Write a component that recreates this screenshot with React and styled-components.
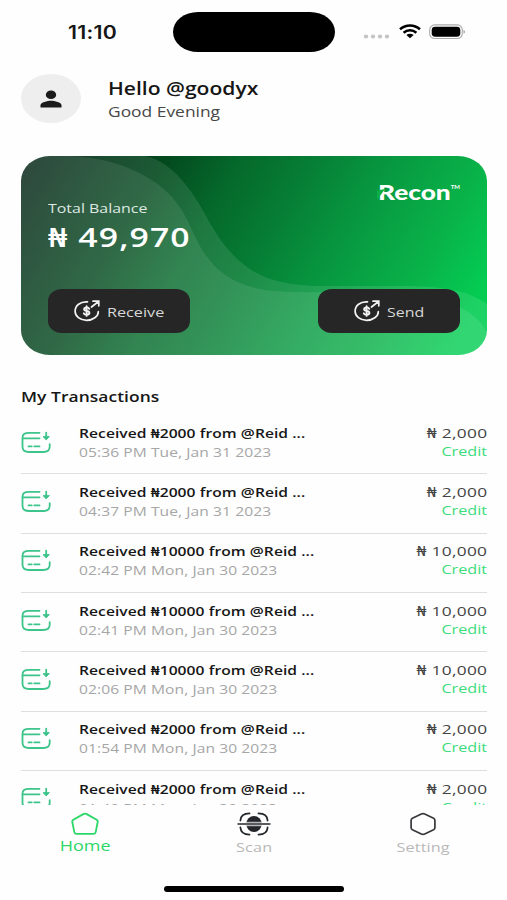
import React from "react";
import styled, { createGlobalStyle } from "styled-components";

const GlobalStyle = createGlobalStyle`
  * { box-sizing: border-box; }
  body { margin: 0; background: #fff; overflow: hidden; }
`;

const Screen = styled.main`
  width: 507px;
  height: 900px;
  display: flex;
  flex-direction: column;
  overflow: hidden;
  background: #fefefe;
  font-family: "Open Sans", "Noto Sans", sans-serif;
  color: #161616;
`;

/* Expanded-width lettering: every label is widened from a fixed edge. */
const Label = styled.span`
  display: block;
  white-space: nowrap;
  flex: none;
  font-size: ${(p) => p.$size}px;
  font-weight: ${(p) => p.$weight || 400};
  line-height: ${(p) => p.$line}px;
  letter-spacing: ${(p) => p.$spacing || 0}px;
  color: ${(p) => p.$color || "inherit"};
  transform: scaleX(${(p) => p.$stretch || 1.2});
  transform-origin: ${(p) => p.$from || "left"} center;
`;

const StatusBar = styled.header`
  height: 64px;
  flex: none;
  display: grid;
  grid-template-columns: 105px 162px 1fr;
  padding: 12px 0 0 68px;
`;

const Clock = styled(Label)`
  font-family: Inter, sans-serif;
  padding-top: 9px;
`;

const Island = styled.div`
  height: 40px;
  border-radius: 25px / 20px;
  background: #000;
`;

const StatusIcons = styled.div`
  display: flex;
  align-items: flex-start;
  gap: 8px;
  padding: 12px 0 0 28px;
  svg { display: block; }
`;

const Greeting = styled.section`
  height: 92px;
  flex: none;
  display: flex;
  gap: 27px;
  padding: 10px 0 0 21px;
`;

const Avatar = styled.div`
  width: 60px;
  height: 49px;
  border-radius: 50%;
  background: #eeeeee;
  display: flex;
  align-items: center;
  justify-content: center;
`;

const GreetingText = styled.div`
  padding-top: 2px;
`;

const Card = styled.section`
  position: relative;
  width: 466px;
  height: 199px;
  flex: none;
  margin-left: 21px;
  border-radius: 29px / 25px;
  overflow: hidden;
  background: linear-gradient(
    120deg,
    #001f12 0%,
    #03491e 25%,
    #05692b 38%,
    #067d34 50%,
    #07943f 62%,
    #09b249 80%,
    #04cb52 92%,
    #06d258 100%
  );
  color: #fff;
`;

const Waves = styled.svg`
  position: absolute;
  inset: 0;
`;

const CardContent = styled.div`
  position: relative;
  height: 100%;
  padding: 24px 27px 22px;
  display: flex;
  flex-direction: column;
  justify-content: space-between;
`;

const CardRow = styled.div`
  display: flex;
  justify-content: space-between;
`;

const Balance = styled.div`
  padding-top: 19px;
`;

const Brand = styled.div`
  position: relative;
  width: 82px;
  display: flex;
  align-items: flex-start;
  justify-content: space-between;
  font-family: Lato, sans-serif;
`;

const BrandCut = styled.svg`
  position: absolute;
  left: -1px;
  top: 3px;
`;

const ActionButton = styled.button`
  width: 142px;
  height: 44px;
  border: 0;
  border-radius: 14px / 12px;
  padding: 0 0 0 ${(p) => p.$inset}px;
  background: #262626;
  color: #d8d8d8;
  font-family: inherit;
  display: flex;
  align-items: center;
  gap: 7px;
  > span { padding-top: 1px; }
`;

const Heading = styled.h2`
  height: 60px;
  flex: none;
  margin: 0;
  padding: 31px 0 0 21px;
`;

const List = styled.ul`
  list-style: none;
  margin: 0 20px 0 21px;
  padding: 0;
  height: 390px;
  flex: none;
  overflow: hidden;
`;

const Row = styled.li`
  height: 59.35px;
  border-bottom: 1.5px solid #dedede;
  display: grid;
  grid-template-columns: 58px 1fr 100px;
  padding-top: 8.500px;
  > svg { margin-top: 7px; }
`;

const Amount = styled.div`
  display: flex;
  flex-direction: column;
  align-items: flex-end;
`;

const TabBar = styled.nav`
  height: 76px;
  flex: none;
  display: flex;
  justify-content: space-between;
  padding: 7px 30px 0 31px;
`;

const Tab = styled.a`
  width: 108px;
  display: flex;
  flex-direction: column;
  align-items: center;
  gap: ${(p) => p.$gap}px;
`;

const HomeIndicator = styled.div`
  width: 180px;
  height: 6px;
  margin: 5px 0 0 164px;
  border-radius: 3px;
  background: #000;
`;

const WifiIcon = () => (
  <svg width="22" height="15" viewBox="0 0 22 15">
    <g fill="none" stroke="#000" strokeWidth="2.5">
      <path d="M1 5.3C6.8.1 15.200.1 21 5.3" />
      <path d="M4.600 8.800C8.300 5.500 13.700 5.500 17.400 8.800" />
    </g>
    <path d="M7.400 10.900c2-1.700 5.200-1.700 7.200 0L11 14.300z" fill="#000" />
  </svg>
);

const SignalDots = () => (
  <svg width="28" height="16" viewBox="0 0 28 16">
    {[3, 10, 17, 24].map((x) => (
      <ellipse key={x} cx={x} cy="12.500" rx="2.200" ry="1.900" fill="#c4c4c4" />
    ))}
  </svg>
);

const BatteryIcon = () => (
  <svg width="37" height="16" viewBox="0 0 37 16">
    <rect x="0.700" y="0.900" width="32.600" height="13.600" rx="5" fill="none" stroke="#aaa" strokeWidth="1.100" />
    <rect x="2.700" y="2.700" width="28.600" height="10" rx="3.400" fill="#000" />
    <path d="M34.600 5.900c1.600.5 1.600 3.200 0 3.700z" fill="#888" />
  </svg>
);

const PersonIcon = () => (
  <svg width="22" height="18" viewBox="0 0 22 18">
    <ellipse cx="11" cy="4.700" rx="5.200" ry="4.300" fill="#1b1b1b" />
    <path d="M.5 17.500v-2.200c0-3 7-4.600 10.500-4.600s10.500 1.600 10.500 4.600v2.200z" fill="#1b1b1b" />
  </svg>
);

const MoneyIcon = () => (
  <svg width="26" height="22" viewBox="0 0 26 22" fill="none" stroke="#f2f2f2" strokeWidth="1.700" strokeLinecap="round">
    <path d="M13.500 1.900C6.200 1.300 1.100 5.600 1.100 11.200c0 5.100 5 9.200 11.400 9.200s11.800-4.100 11.800-8.700" />
    <path d="M17.500 7 24.500 1.500M19 1.200h5.800v4.600" />
    <path d="M15.300 8.800c-.4-1-1.300-1.400-2.600-1.400-3.300 0-3.500 3.200 0 3.600 3.700.4 3.500 3.800 0 3.800-1.500 0-2.500-.5-2.900-1.500M12.600 6.300v9.600" strokeWidth="1.900" />
  </svg>
);

const CardInIcon = () => (
  <svg width="30" height="23" viewBox="0 0 30 23" fill="none" stroke="#3cc48a" strokeWidth="1.800" strokeLinecap="round">
    <path d="M18.500 1.800H8C3.500 1.800 1.500 3.300 1.500 6.800v8.900c0 3.700 2 5.300 6.500 5.300h14c4.500 0 6.700-1.600 6.700-5.300v-2.500" />
    <path d="M1.700 7.300h16.800M7.500 15.400h3.200M13.300 15.400h5.200" />
    <path d="M25.200 1.700v6" />
    <path d="m22.300 5.900 2.900 2.800 2.900-2.800z" fill="#3cc48a" strokeWidth="1" strokeLinejoin="round" />
  </svg>
);

const PentagonIcon = () => (
  <svg width="28" height="24" viewBox="0 0 28 24">
    <path
      d="M12.300 2.100 2.300 7.800Q1 8.700 1.300 10L3.300 20.100Q3.700 21.900 5.700 21.900H22.300Q24.300 21.900 24.700 20.100L26.700 10Q27 8.700 25.700 7.800L15.700 2.100Q14 1.200 12.300 2.100z"
      fill="none" stroke="#2bd768" strokeWidth="1.800"
    />
  </svg>
);

const ScanIcon = () => (
  <svg width="34" height="24" viewBox="0 0 34 24">
    <ellipse cx="17" cy="12" rx="7.700" ry="8" fill="#23272b" />
    <path d="M12.500 1.400C6.500 1.400 3.700 3.500 3.400 8.500M21.500 1.400c6 0 8.800 2.100 9.100 7.100M12.500 22.600c-6 0-8.800-2.100-9.100-7.100M21.500 22.600c6 0 8.800-2.100 9.100-7.100" fill="none" stroke="#23272b" strokeWidth="1.800" strokeLinecap="round" />
    <path d="M9 10.300h16M9 13.700h16" stroke="#ddd" strokeWidth="1" />
    <path d="M.5 12h33" stroke="#5a5d60" strokeWidth="2" />
  </svg>
);

const HexagonIcon = () => (
  <svg width="26" height="24" viewBox="0 0 26 24">
    <path
      d="M11.300 2.100 2.400 6.300Q1.100 7 1.100 8.200v7.600q0 1.200 1.300 1.900l8.900 4.200q1.700.8 3.400 0l8.900-4.200q1.300-.7 1.300-1.900V8.200q0-1.200-1.300-1.900L14.700 2.100Q13 1.300 11.300 2.100z"
      fill="none" stroke="#36383b" strokeWidth="1.700"
    />
  </svg>
);

const transactions = [
  { sum: "2000", shown: "2,000", date: "05:36 PM Tue, Jan 31 2023" },
  { sum: "2000", shown: "2,000", date: "04:37 PM Tue, Jan 31 2023" },
  { sum: "10000", shown: "10,000", date: "02:42 PM Mon, Jan 30 2023" },
  { sum: "10000", shown: "10,000", date: "02:41 PM Mon, Jan 30 2023" },
  { sum: "10000", shown: "10,000", date: "02:06 PM Mon, Jan 30 2023" },
  { sum: "2000", shown: "2,000", date: "01:54 PM Mon, Jan 30 2023" },
  { sum: "2000", shown: "2,000", date: "01:40 PM Mon, Jan 30 2023" },
];

export default function App() {
  return (
    <Screen>
      <GlobalStyle />
      <StatusBar>
        <Clock $size={18} $line={23} $weight={600} $stretch={1.18} $spacing={0.200}>11:10</Clock>
        <Island />
        <StatusIcons>
          <SignalDots />
          <WifiIcon />
          <BatteryIcon />
        </StatusIcons>
      </StatusBar>

      <Greeting>
        <Avatar><PersonIcon /></Avatar>
        <GreetingText>
          <Label $size={18} $line={24} $weight={600} $stretch={1.17}>Hello @goodyx</Label>
          <Label $size={15} $line={22} $color="#484848" $stretch={1.16}>Good Evening</Label>
        </GreetingText>
      </Greeting>

      <Card>
        <Waves width="466" height="199" viewBox="21 156 466 199">
          <path d="M21 156H146C172 162 192 190 205 214C217 236 228 254 250 269C268 281 290 285 317 286H400C440 286 468 290 487 304V355H21z" fill="#fff" fillOpacity=".1" />
          <path d="M21 156H70C120 158 155 178 172 197C190 218 192 235 205 254C218 273 235 285 265 290C300 294 330 291 380 292C430 292 475 305 487 333V355H21z" fill="#fff" fillOpacity=".09" />
        </Waves>
        <CardContent>
          <CardRow>
            <Balance>
              <Label $size={13.500} $line={19} $color="#dfe9e2" $stretch={1.18}>Total Balance</Label>
              <Label $size={27} $line={38} $weight={600} $stretch={1.25} $spacing={0.900}>₦ 49,970</Label>
            </Balance>
            <Brand>
              <Label $size={20.500} $line={24} $weight={900} $stretch={1.28}>Recon</Label>
              <Label $size={6} $line={14} $weight={700} $stretch={1} $from="right">TM</Label>
              <BrandCut width="12" height="18" viewBox="0 0 12 18">
                <path d="M0 7.500 8 6 0 17z" fill="#0cae48" />
              </BrandCut>
            </Brand>
          </CardRow>
          <CardRow>
            <ActionButton $inset={26}>
              <MoneyIcon />
              <Label $size={13.500} $line={20}>Receive</Label>
            </ActionButton>
            <ActionButton $inset={36}>
              <MoneyIcon />
              <Label $size={13.500} $line={20} $stretch={1.18}>Send</Label>
            </ActionButton>
          </CardRow>
        </CardContent>
      </Card>

      <Heading>
        <Label $size={14.500} $line={21} $weight={600} $spacing={0.050}>My Transactions</Label>
      </Heading>

      <List>
        {transactions.map((t) => (
          <Row key={t.date}>
            <CardInIcon />
            <div>
              <Label $size={13} $line={19} $weight={600} $spacing={0.050}>Received ₦{t.sum} from @Reid ...</Label>
              <Label $size={13} $line={18} $color="#a6a6a6" $spacing={0.060}>{t.date}</Label>
            </div>
            <Amount>
              <Label $size={13.500} $line={18} $color="#444" $from="right" $stretch={1.28} $spacing={0.250}>₦ {t.shown}</Label>
              <Label $size={13.500} $line={19} $color="#3ddc7c" $from="right">Credit</Label>
            </Amount>
          </Row>
        ))}
      </List>

      <TabBar>
        <Tab $gap={-1}>
          <PentagonIcon />
          <Label $size={15} $line={19} $weight={500} $color="#2bd768" $from="center">Home</Label>
        </Tab>
        <Tab $gap={1}>
          <ScanIcon />
          <Label $size={13.500} $line={20} $color="#b8b8b8" $from="center" $spacing={0.200}>Scan</Label>
        </Tab>
        <Tab $gap={1}>
          <HexagonIcon />
          <Label $size={13.500} $line={20} $color="#b8b8b8" $from="center" $spacing={0.100}>Setting</Label>
        </Tab>
      </TabBar>
      <HomeIndicator />
    </Screen>
  );
}
